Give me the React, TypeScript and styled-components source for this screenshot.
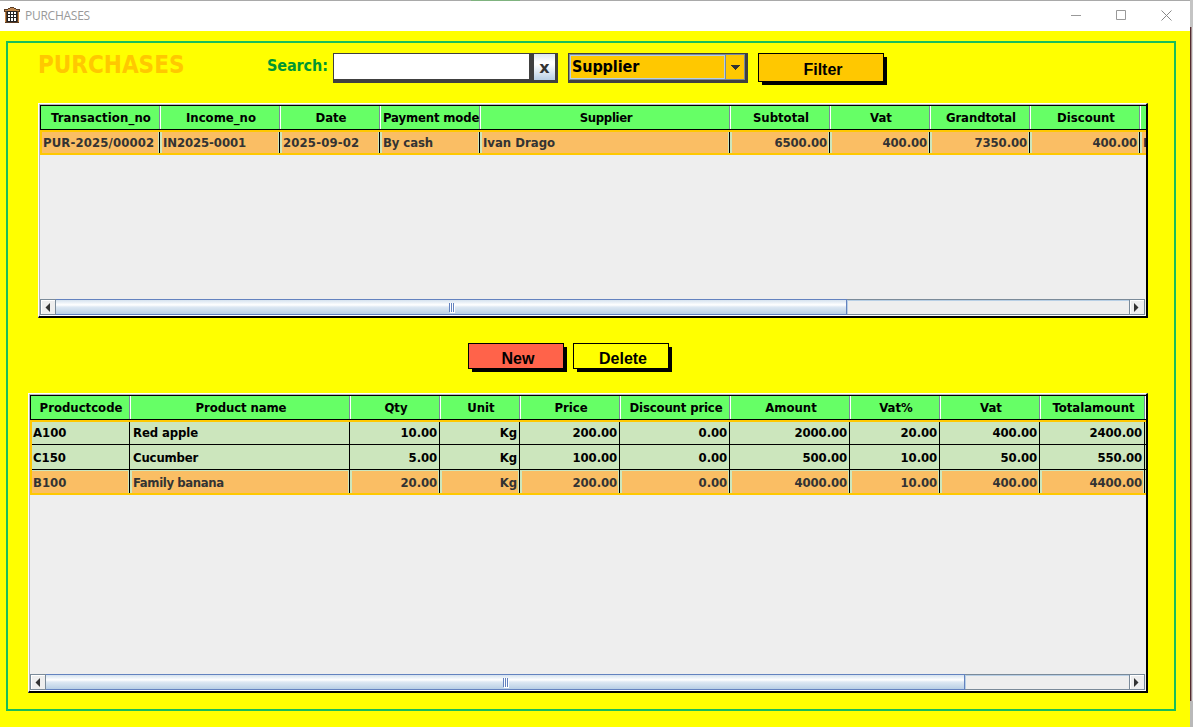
import React from "react";
import styled, { createGlobalStyle, css } from "styled-components";

const GlobalStyle = createGlobalStyle`
  * { box-sizing: border-box; }
  html, body { margin: 0; padding: 0; overflow: hidden; }
  body { background: #d0d0d0; }
`;

const tahoma = css`
  font-family: "DejaVu Sans Condensed", "DejaVu Sans", sans-serif;
  font-stretch: condensed;
  font-weight: 700;
`;

const Desktop = styled.div`
  display: flex;
  width: 1193px;
  height: 727px;
  overflow: hidden;
`;

const Window = styled.div`
  width: 1190px;
  height: 727px;
  background: #ffff00;
`;

const WindowEdge = styled.div`
  width: 3px;
  background: linear-gradient(to right, rgba(70, 25, 30, 0.9) 0 1px, rgba(160, 140, 140, 1) 1px 2px, #d6d6d6 2px 3px);
  border-top: 27px solid #c4c4c4;
  border-bottom: 26px solid #b9b9b9;
`;

const TitleBar = styled.header`
  display: flex;
  align-items: center;
  height: 31px;
  padding: 0 18px 2px 4px;
  background: #fff;
  border-top: 1px solid;
  border-image: linear-gradient(to right, #a9a9a9 471px, #7fb37f 471px 520px, #a9a9a9 520px) 1;
`;

const TitleText = styled.span`
  flex: 1;
  margin-left: 5px;
  padding-top: 1px;
  font: 12px/16px "Open Sans", sans-serif;
  letter-spacing: -0.25px;
  color: #999;
`;

const Controls = styled.div`
  display: flex;
  gap: 34px;
`;

const Panel = styled.main`
  width: 1170px;
  height: 670px;
  margin: 10px 0 0 6px;
  border: 2px solid #19bd5a;
  padding: 10px 0 0 20px;
`;

const Toolbar = styled.div`
  display: flex;
  align-items: flex-start;
  height: 50px;
  padding-left: 10px;
`;

const Heading = styled.h1<{ $w: number }>`
  ${tahoma}
  width: ${(p) => p.$w}px;
  margin: -3px 0 0;
  font-size: 24px;
  line-height: 30px;
  color: #ffc800;
  white-space: nowrap;
`;

const SearchLabel = styled.label`
  ${tahoma}
  width: 66px;
  padding-top: 1px;
  font-size: 16px;
  line-height: 24px;
  letter-spacing: -0.1px;
  color: #009632;
  white-space: nowrap;
`;

const SearchInput = styled.input`
  width: 199px;
  height: 30px;
  padding: 0 4px;
  border: solid #404040;
  border-width: 1px 3px 4px 1px;
  border-radius: 0;
  outline: 0;
  background: #fff;
`;

const ClearButton = styled.button`
  width: 26px;
  height: 30px;
  margin-right: 10px;
  padding: 1px 0 0;
  border: solid #404040;
  border-width: 1px 3px 3px 2px;
  background: linear-gradient(#dde8f3, #fff 30%, #fff 40%, #b8cfe5);
  font: bold 16px/20px "DejaVu Sans", sans-serif;
  color: #333;
`;

const Combo = styled.div`
  display: flex;
  width: 180px;
  height: 30px;
  margin-right: 10px;
  border: solid #404040;
  border-width: 1px 3px 3px 1px;
`;

const ComboValue = styled.div`
  ${tahoma}
  width: 156px;
  padding: 1px 0 0 2px;
  border: 1px solid #7a8a99;
  border-right: 0;
  box-shadow: inset 0 0 0 1px #b8cfe5;
  font-size: 16px;
  line-height: 22px;
  letter-spacing: -0.1px;
  background: #ffc800;
`;

const ComboArrow = styled.div`
  display: flex;
  align-items: center;
  justify-content: center;
  width: 20px;
  border: 1px solid #7a8a99;
  background: #ffc800;
`;

const PushButton = styled.button<{ $w: number; $h: number; $top: number; $bg: string }>`
  width: ${(p) => p.$w}px;
  height: ${(p) => p.$h}px;
  padding: ${(p) => p.$top}px 0 0 4px;
  border: 1px solid #000;
  background: ${(p) => p.$bg};
  box-shadow: 3.5px 3.5px 0 -0.5px #000;
  font: bold 16px/18px "Liberation Sans", sans-serif;
  color: #000;
`;

const Actions = styled.div`
  display: flex;
  align-items: center;
  gap: 9px;
  height: 75px;
  padding: 1px 0 0 440px;
`;

const ScrollPane = styled.section<{ $indent: number; $w: number; $h: number }>`
  display: flex;
  flex-direction: column;
  width: ${(p) => p.$w}px;
  height: ${(p) => p.$h}px;
  margin-left: ${(p) => p.$indent}px;
  border: solid;
  border-width: 1px 2px 2px 1px;
  border-color: #fff #000 #000 #fff;
  overflow: hidden;
`;

const Viewport = styled.div`
  flex: 1;
  overflow: hidden;
  border: solid #b8b8b8;
  border-width: 1px 0 0 1px;
  background: #eee;
`;

const HeaderRow = styled.div<{ $cols: string }>`
  display: grid;
  grid-template-columns: ${(p) => p.$cols};
  width: max-content;
  height: 25px;
  background: #66ff66;
  box-shadow: inset 0 1px #000, inset 0 -1px #000, inset 1px 0 #000;
`;

const HeaderCell = styled.div<{ $spacing: number }>`
  ${tahoma}
  height: 23px;
  margin-top: 1px;
  padding-left: 3px;
  border-right: 1px solid #7a8a99;
  box-shadow: 1px 0 #fff;
  font-size: 13px;
  line-height: 23px;
  letter-spacing: ${(p) => p.$spacing}px;
  text-align: center;
  white-space: nowrap;
  &:last-child { border: 0; box-shadow: none; padding: 0; }
`;

const Body = styled.div`
  position: relative;
  width: max-content;
  &::after {
    content: "";
    position: absolute;
    inset: 0;
    border: 2px solid #ffc800;
    border-right: 0;
  }
`;

const Row = styled.div<{ $cols: string }>`
  display: grid;
  grid-template-columns: ${(p) => p.$cols};
  height: 25px;
  background: #cce6bd;
  border-bottom: 1px solid #000;
`;

const Cell = styled.div<{ $right: boolean; $selected: boolean; $spacing: number }>`
  ${tahoma}
  padding: 1px 2px 0 3px;
  border-right: 1px solid #000;
  background: ${(p) => (p.$selected ? "#fabe64" : "transparent")};
  box-shadow: ${(p) => (p.$selected ? "inset 2px 1px #cce6bd, inset -1px 0 #cce6bd" : "none")};
  font-size: 13px;
  line-height: 24px;
  letter-spacing: ${(p) => p.$spacing}px;
  text-align: ${(p) => (p.$right ? "right" : "left")};
  color: ${(p) => (p.$selected ? "#333" : "#000")};
  white-space: nowrap;
  overflow: hidden;
`;

const ScrollBar = styled.div`
  display: flex;
  height: 17px;
  margin-left: 1px;
  padding-right: 1px;
  box-shadow: -1px 0 #b8b8b8;
  background: #eee;
  border-bottom: 1px solid #fff;
`;

const ArrowButton = styled.div<{ $w: number }>`
  display: flex;
  align-items: center;
  justify-content: center;
  width: ${(p) => p.$w}px;
  padding: 1px 1px 0 0;
  border: 1px solid #7a8a99;
  box-shadow: inset 1px 1px #fff;
`;

const Thumb = styled.div<{ $w: number }>`
  display: flex;
  align-items: center;
  justify-content: center;
  width: ${(p) => p.$w}px;
  border: 1px solid #6382bf;
  border-left: 0;
  background: linear-gradient(#d5e2ef, #fff 35%, #dde8f3 50%, #b8cfe5);
`;

const Track = styled.div`
  flex: 1;
  border: solid #7a8a99;
  border-width: 1px 0;
  box-shadow: inset 1px 1px #b8cfe5;
`;

const Grip = styled.div`
  width: 5px;
  height: 9px;
  background: repeating-linear-gradient(to right, #6382bf 0 1px, #fff 1px 2px);
  box-shadow: 1px 1px #fff;
`;

type TableData = {
  widths: number[];
  headers: string[];
  rightFrom: number;
  rows: string[][];
  selected: number;
};

const purchases: TableData = {
  widths: [120, 120, 100, 100, 250, 100, 100, 100, 110, 100],
  headers: ["Transaction_no", "Income_no", "Date", "Payment mode", "Supplier", "Subtotal", "Vat", "Grandtotal", "Discount", ""],
  rightFrom: 5,
  rows: [["PUR-2025/00002", "IN2025-0001", "2025-09-02", "By cash", "Ivan Drago", "6500.00", "400.00", "7350.00", "400.00", "I"]],
  selected: 0,
};

const products: TableData = {
  widths: [100, 220, 90, 80, 100, 110, 120, 90, 100, 105, 1],
  headers: ["Productcode", "Product name", "Qty", "Unit", "Price", "Discount price", "Amount", "Vat%", "Vat", "Totalamount", ""],
  rightFrom: 2,
  rows: [
    ["A100", "Red apple", "10.00", "Kg", "200.00", "0.00", "2000.00", "20.00", "400.00", "2400.00"],
    ["C150", "Cucumber", "5.00", "Kg", "100.00", "0.00", "500.00", "10.00", "50.00", "550.00"],
    ["B100", "Family banana", "20.00", "Kg", "200.00", "0.00", "4000.00", "10.00", "400.00", "4400.00"],
  ],
  selected: 2,
};

// Tracking adjustments that keep the labels at their native widths.
const tracking: Record<string, number> = {
  Transaction_no: 0.1,
  "Payment mode": -0.15,
  Supplier: -0.35,
  Grandtotal: -0.1,
  "Product name": -0.1,
  "Discount price": -0.15,
  "PUR-2025/00002": 0.13,
  "2025-09-02": 0.15,
  "IN2025-0001": -0.1,
  "By cash": -0.1,
  "Red apple": -0.1,
  Cucumber: -0.15,
  "Family banana": -0.38,
};

function DataTable({ data }: { data: TableData }) {
  const cols = data.widths.map((w) => `${w}px`).join(" ");
  return (
    <Viewport>
      <HeaderRow $cols={cols}>
        {data.headers.map((h, i) => (
          <HeaderCell key={i} $spacing={tracking[h] ?? 0}>{h}</HeaderCell>
        ))}
      </HeaderRow>
      <Body>
        {data.rows.map((row, r) => (
          <Row key={r} $cols={cols}>
            {row.map((v, c) => {
              const right = c >= data.rightFrom && v !== "I";
              return (
                <Cell key={c} $right={right} $selected={r === data.selected} $spacing={tracking[v] ?? (right ? -0.12 : 0)}>
                  {v}
                </Cell>
              );
            })}
          </Row>
        ))}
      </Body>
    </Viewport>
  );
}

function HorizontalScroll({ thumb }: { thumb: number }) {
  return (
    <ScrollBar>
      <ArrowButton $w={16}>
        <svg width="5" height="9"><path d="M5 0v9L.5 4.5z" fill="#333" /></svg>
      </ArrowButton>
      <Thumb $w={thumb}><Grip /></Thumb>
      <Track />
      <ArrowButton $w={16}>
        <svg width="5" height="9"><path d="M0 0v9l4.5-4.5z" fill="#333" /></svg>
      </ArrowButton>
    </ScrollBar>
  );
}

function WarehouseIcon() {
  return (
    <svg width="16" height="16" viewBox="0 0 16 16" shapeRendering="crispEdges">
      <path d="M0 2h4V1h2V0h4v1h2v1h4v3h-1v11H1V5H0z" fill="#5a3c24" />
      <path d="M1 3h14v1H1zM6 1h4v1H6zM4 2h8v1H4z" fill="#c08850" />
      <path d="M1 5h1v10H1zM14 5h1v10h-1z" fill="#c88848" />
      <path d="M3 4h10v11H3z" fill="#222" />
      <path d="M4 5h2v2H4zM7 5h2v2H7zM10 5h2v2h-2zM4 8h2v2H4zM7 8h2v2H7zM10 8h2v2h-2zM4 11h2v3H4zM7 11h2v3H7zM10 11h2v3h-2z" fill="#fff" />
    </svg>
  );
}

export default function App() {
  return (
    <>
      <GlobalStyle />
      <Desktop>
        <Window>
          <TitleBar>
            <WarehouseIcon />
            <TitleText>PURCHASES</TitleText>
            <Controls>
              <svg width="11" height="11"><path d="M0 5.5h10" stroke="#999" fill="none" /></svg>
              <svg width="11" height="11"><path d="M.5 .5h9v9h-9z" stroke="#999" fill="none" /></svg>
              <svg width="11" height="11"><path d="M.5 .5l10 10M10.5 .5l-10 10" stroke="#888" fill="none" /></svg>
            </Controls>
          </TitleBar>
          <Panel>
            <Toolbar>
              <Heading $w={229}>PURCHASES</Heading>
              <SearchLabel htmlFor="search">Search:</SearchLabel>
              <SearchInput id="search" />
              <ClearButton>x</ClearButton>
              <Combo>
                <ComboValue>Supplier</ComboValue>
                <ComboArrow>
                  <svg width="10" height="5" shapeRendering="crispEdges"><path d="M0 0h10L5 5z" fill="#333" /></svg>
                </ComboArrow>
              </Combo>
              <PushButton $w={126} $h={29} $top={5} $bg="#ffc800">Filter</PushButton>
            </Toolbar>
            <ScrollPane $indent={10} $w={1110} $h={215}>
              <DataTable data={purchases} />
              <HorizontalScroll thumb={791} />
            </ScrollPane>
            <Actions>
              <PushButton $w={96} $h={26} $top={6} $bg="#ff634a">New</PushButton>
              <PushButton $w={96} $h={26} $top={6} $bg="#ffff00">Delete</PushButton>
            </Actions>
            <ScrollPane $indent={0} $w={1120} $h={300}>
              <DataTable data={products} />
              <HorizontalScroll thumb={919} />
            </ScrollPane>
          </Panel>
        </Window>
        <WindowEdge />
      </Desktop>
    </>
  );
}
